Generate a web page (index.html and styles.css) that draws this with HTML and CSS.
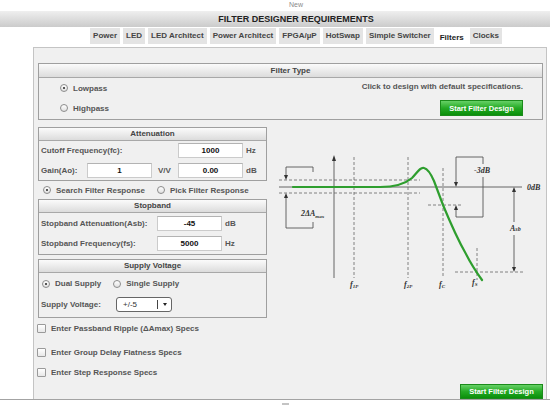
FILE: index.html
```html
<!DOCTYPE html>
<html>
<head>
<meta charset="utf-8">
<link rel="stylesheet" href="styles.css">
</head>
<body>
<div class="new">New</div>
<div class="hdr">FILTER DESIGNER REQUIREMENTS</div>
<div class="tabs">
  <span class="tab">Power</span>
  <span class="tab">LED</span>
  <span class="tab">LED Architect</span>
  <span class="tab">Power Architect</span>
  <span class="tab">FPGA/µP</span>
  <span class="tab">HotSwap</span>
  <span class="tab">Simple Switcher</span>
  <span class="tab active">Filters</span>
  <span class="tab">Clocks</span>
</div>
<div class="panel">
  <div class="box ftype">
    <div class="bh">Filter Type</div>
    <div class="ftbody">
      <div class="ftleft">
        <div class="opt"><span class="radio on"></span>Lowpass</div>
        <div class="opt"><span class="radio"></span>Highpass</div>
      </div>
      <div class="ftright">
        <div class="hint">Click to design with default specifications.</div>
        <button class="gbtn">Start Filter Design</button>
      </div>
    </div>
  </div>
  <div class="mid">
    <div class="leftcol">
      <div class="box att">
        <div class="bh">Attenuation</div>
        <div class="row r1"><span class="lbl w-cut">Cutoff Frequency(fc):</span><span class="field">1000</span><span class="unit">Hz</span></div>
        <div class="row"><span class="lbl w-gain">Gain(Ao):</span><span class="field">1</span><span class="vv">V/V</span><span class="field">0.00</span><span class="unit">dB</span></div>
      </div>
      <div class="resp">
        <span class="radio on"></span><span>Search Filter Response</span>
        <span class="radio pick"></span><span>Pick Filter Response</span>
      </div>
      <div class="box stop">
        <div class="bh">Stopband</div>
        <div class="row"><span class="lbl w-stop">Stopband Attenuation(Asb):</span><span class="field">-45</span><span class="unit">dB</span></div>
        <div class="row"><span class="lbl w-stop">Stopband Frequency(fs):</span><span class="field">5000</span><span class="unit">Hz</span></div>
      </div>
      <div class="box supply">
        <div class="bh">Supply Voltage</div>
        <div class="row dual">
          <span class="radio on"></span><span>Dual Supply</span>
          <span class="radio single"></span><span>Single Supply</span>
        </div>
        <div class="row"><span class="lbl w-sup">Supply Voltage:</span>
          <span class="sel"><span class="sv">+/-5</span><span class="sep"></span><span class="arr"></span></span>
        </div>
      </div>
    </div>
    <svg class="graph" width="273" height="170" viewBox="270 127 273 170">
      <g stroke="#555" stroke-width="0.9" fill="none">
        <path d="M279 187 H522"/>
        <path d="M334 160 V278"/>
        <path d="M313 172 V167 H286 V176"/>
        <path d="M313 222 V228 H286 V197"/>
        <path d="M456 157 V183 M456 157 H483 V164 M483 177 V217 H456 V209"/>
        <path d="M514 191 V222 M514 235 V268"/>
      </g>
      <g stroke="#666" stroke-width="0.8" stroke-dasharray="3 2" fill="none">
        <path d="M354 157 V278 M408 157 V278 M443 168 V278 M477 248 V280"/>
        <path d="M279 180 H420 M279 193 H420 M428 205 H463 M455 272 H524"/>
      </g>
      <g fill="#333">
        <polygon points="334,155 332,161 336,161"/>
        <polygon points="284,175 288,175 286,180"/>
        <polygon points="284,198 288,198 286,193"/>
        <polygon points="454,182 458,182 456,187"/>
        <polygon points="454,210 458,210 456,205"/>
        <polygon points="512,192 516,192 514,187"/>
        <polygon points="512,267 516,267 514,272"/>
      </g>
      <path d="M293 187 L380 187 C395 187 405 184 412 178 C417 173 420 167 424 168 C428 169 431 174 434 181 L443 205 C450 222 458 240 466 254 C472 266 477 273 482 280" stroke="#2e9e2e" stroke-width="2.2" fill="none" stroke-linecap="round"/>
      <g font-family="'Liberation Serif', serif" font-style="italic" font-size="8" fill="#333">
        <text x="301" y="216">2ΔA<tspan font-size="5" dy="1.5">max</tspan></text>
        <text x="482" y="173" text-anchor="middle">-3dB</text>
        <text x="527" y="190">0dB</text>
        <text x="510" y="231">A<tspan font-size="6">sb</tspan></text>
        <text x="350" y="287">f<tspan font-size="5" dy="1">1P</tspan></text>
        <text x="404" y="287">f<tspan font-size="5" dy="1">2P</tspan></text>
        <text x="439" y="287">f<tspan font-size="5" dy="1">C</tspan></text>
        <text x="472" y="285">f<tspan font-size="5" dy="1">S</tspan></text>
      </g>
    </svg>
  </div>
  <div class="checks">
    <div class="ck c1"><span class="cb"></span>Enter Passband Ripple (ΔAmax) Specs</div>
    <div class="ck c2"><span class="cb"></span>Enter Group Delay Flatness Specs</div>
    <div class="ck c3"><span class="cb"></span>Enter Step Response Specs</div>
  </div>
  <div class="btnrow"><button class="gbtn bottom">Start Filter Design</button></div>
</div>
<div class="status"><span class="grip"></span></div>
</body>
</html>
```

FILE: styles.css
```css
body {
  margin: 0;
  width: 550px;
  height: 410px;
  overflow: hidden;
  background: #fff;
  font-family: "Liberation Sans", Arial, sans-serif;
  font-size: 8px;
  font-weight: bold;
  color: #555;
}

.new {
  height: 11px;
  line-height: 9px;
  padding-left: 42px;
  text-align: center;
  font-size: 7px;
  font-weight: normal;
  color: #8a8a8a;
}

.hdr {
  height: 16px;
  line-height: 16px;
  padding-left: 42px;
  text-align: center;
  font-size: 9px;
  color: #222;
  background: linear-gradient(#efefef, #cbcbcb);
}

.tabs {
  height: 20px;
  display: flex;
  justify-content: center;
  gap: 3px;
  padding-left: 42px;
}

.tab {
  margin-top: 1px;
  height: 16px;
  line-height: 16px;
  padding: 0 3px;
  background: #e4e4e4;
  color: #444;
}

.tab.active {
  background: #fff;
  color: #222;
  height: 19px;
  line-height: 20px;
}

.panel {
  margin-left: 33px;
  width: 514px;
  height: 352px;
  box-sizing: border-box;
  border: 1px solid #c4c4c4;
  border-bottom: none;
  background: #f0f0f0;
  padding: 15px 3px 0 4px;
}

.box {
  border: 1px solid #9f9f9f;
}

.bh {
  height: 12px;
  line-height: 12px;
  text-align: center;
  color: #444;
  background: linear-gradient(#fbfbfb, #dcdcdc);
  border-bottom: 1px solid #a8a8a8;
}

.ftype .bh {
  height: 13px;
  line-height: 13px;
}

.ftbody {
  height: 41px;
  display: flex;
  justify-content: space-between;
}

.ftleft {
  padding-left: 21px;
}

.opt {
  display: flex;
  align-items: center;
  height: 20px;
}

.radio {
  flex: none;
  position: relative;
  width: 8px;
  height: 8px;
  box-sizing: border-box;
  border-radius: 50%;
  border: 1px solid #8c8c8c;
  background: linear-gradient(#fff, #e0e0e0);
  margin-right: 5px;
}

.radio.on::after {
  content: "";
  position: absolute;
  left: 2px;
  top: 2px;
  width: 2px;
  height: 2px;
  border-radius: 50%;
  background: #222;
}

.ftright {
  display: flex;
  flex-direction: column;
  align-items: flex-end;
  padding-right: 19px;
  padding-top: 2px;
}

.hint {
  line-height: 14px;
}

.gbtn {
  width: 83px;
  height: 16px;
  margin-top: 6px;
  padding: 0;
  border: 1px solid #1b8b1b;
  background: linear-gradient(#66d166, #25aa25 50%, #0a8f0a);
  color: #fff;
  font: bold 7.5px "Liberation Sans", Arial, sans-serif;
}

.gbtn.bottom {
  height: 15px;
  margin-top: 0;
}

.mid {
  display: flex;
  gap: 3px;
  margin-top: 7px;
}

.leftcol {
  width: 229px;
  flex: none;
}

.graph {
  flex: none;
  display: block;
}

.row {
  display: flex;
  align-items: center;
  height: 20px;
  padding-left: 2px;
}

.att .r1 {
  height: 19px;
}

.lbl {
  flex: none;
}

.w-cut { width: 137px; }
.w-gain { width: 46px; }
.w-stop { width: 116px; }
.w-sup { width: 75px; }

.field {
  flex: none;
  width: 65px;
  height: 15px;
  box-sizing: border-box;
  background: #fff;
  border: 1px solid #cbcbcb;
  border-top-color: #b3b3b3;
  text-align: center;
  line-height: 13px;
  color: #111;
}

.unit {
  margin-left: 3px;
}

.vv {
  width: 26px;
  box-sizing: border-box;
  padding-left: 6px;
}

.resp {
  height: 18px;
  display: flex;
  align-items: center;
  padding-left: 5px;
}

.resp .pick {
  margin-left: 12px;
}

.stop {
  padding-bottom: 1px;
}

.supply {
  margin-top: 4px;
  padding-bottom: 3px;
}

.supply .dual {
  height: 21px;
  padding-left: 3px;
}

.dual .single {
  margin-left: 12px;
}

.sel {
  display: flex;
  align-items: center;
  width: 56px;
  height: 15px;
  box-sizing: border-box;
  border: 1px solid #666;
  border-radius: 3px;
  background: #fff;
  font-weight: normal;
  color: #333;
}

.sv {
  width: 34px;
  padding-left: 6px;
}

.sep {
  width: 1px;
  height: 9px;
  background: #444;
}

.arr {
  margin-left: 5px;
  width: 0;
  height: 0;
  border-left: 2.5px solid transparent;
  border-right: 2.5px solid transparent;
  border-top: 3px solid #222;
}

.ck {
  display: flex;
  align-items: center;
  height: 14px;
  margin-left: -1px;
}

.c1 { margin-top: 3px; }
.c2 { margin-top: 10px; }
.c3 { margin-top: 6px; }

.cb {
  flex: none;
  width: 9px;
  height: 9px;
  box-sizing: border-box;
  border: 1px solid #9a9a9a;
  border-radius: 1px;
  background: linear-gradient(#fff, #e8e8e8);
  margin-right: 5px;
}

.btnrow {
  display: flex;
  justify-content: flex-end;
  margin-top: 5px;
}

.status {
  height: 11px;
  box-sizing: border-box;
  border-top: 1px solid #a3a3a3;
  background: #fff;
}

.grip {
  display: block;
  width: 7px;
  height: 2px;
  margin-left: 282px;
  margin-top: 3px;
  background: #c4c4c4;
}
```
